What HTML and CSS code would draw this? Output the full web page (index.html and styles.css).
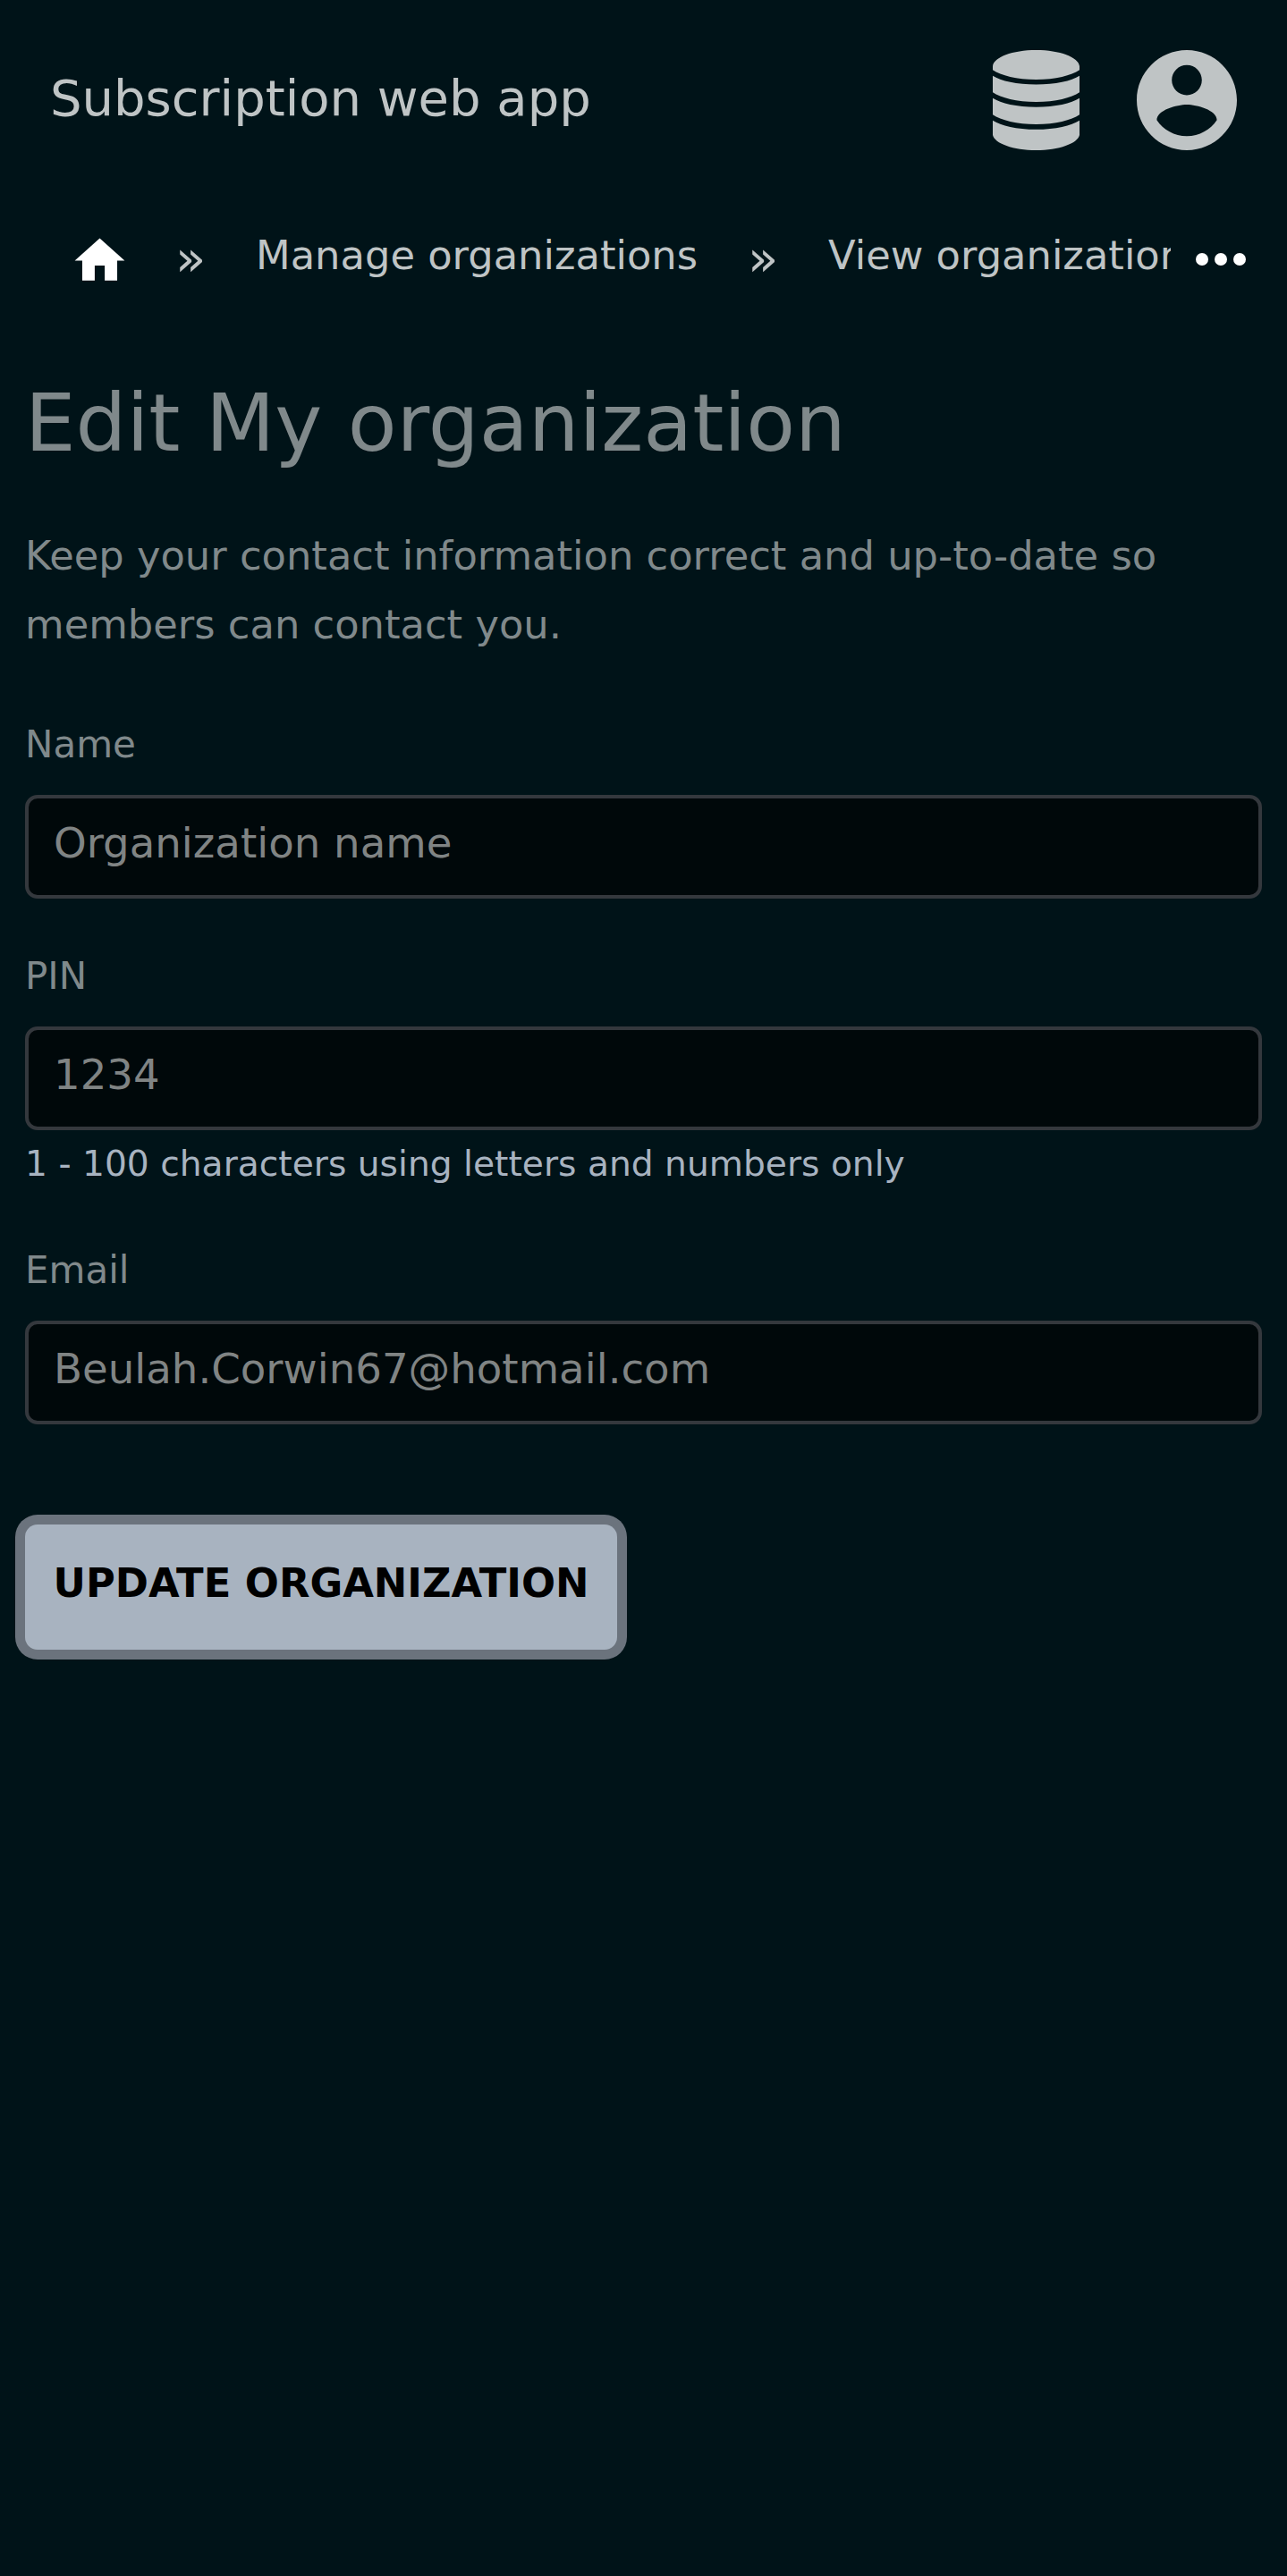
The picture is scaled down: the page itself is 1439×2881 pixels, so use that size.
FILE: index.html
```html
<!DOCTYPE html>
<html lang="en">
<head>
<meta charset="utf-8">
<title>Subscription web app</title>
<link rel="stylesheet" href="styles.css">
</head>
<body>
<header class="topbar">
  <a class="brand">Subscription web app</a>
  <div class="actions">
    <svg class="icon-db" viewBox="0 0 97 112"><path d="M0 18C1 8 22 0 48.500 0S96 8 97 18V22.300C88 28.500 70 33 48.500 33S9 28.500 0 22.300ZM0 28.700C9 34.500 27 38.500 48.500 38.500S88 34.500 97 28.700V47.300C88 53.500 70 58 48.500 58S9 53.500 0 47.300ZM0 53.700C9 59.500 27 63.700 48.500 63.700S88 59.500 97 53.700V72.300C88 78.500 70 83 48.500 83S9 78.500 0 72.300ZM0 78.700C9 84.500 27 88.800 48.500 88.800S88 84.500 97 78.700V95C95 104.500 74 112 48.500 112S2 104.500 0 95Z"/></svg>
    <svg class="icon-user" viewBox="2 2 20 20"><path d="M12 2C6.480 2 2 6.480 2 12s4.480 10 10 10 10-4.480 10-10S17.520 2 12 2zm0 3c1.660 0 3 1.340 3 3s-1.340 3-3 3-3-1.340-3-3 1.340-3 3-3zm0 14.200c-2.500 0-4.710-1.280-6-3.220.030-1.990 4-3.080 6-3.080 1.990 0 5.970 1.090 6 3.080-1.290 1.940-3.500 3.220-6 3.220z"/></svg>
  </div>
</header>
<nav class="crumbs">
  <div class="trail">
    <svg class="icon-home" viewBox="0 0 24 24"><path d="M10 20v-6h4v6h5v-8h3L12 3 2 12h3v8z"/></svg>
    <span class="sep">»</span>
    <a class="crumb">Manage organizations</a>
    <span class="sep">»</span>
    <a class="crumb">View organization</a>
  </div>
  <svg class="icon-more" viewBox="0 0 24 24"><circle cx="6" cy="12" r="2"/><circle cx="12" cy="12" r="2"/><circle cx="18" cy="12" r="2"/></svg>
</nav>
<main class="content">
  <h1 class="heading">Edit My organization</h1>
  <p class="intro">Keep your contact information correct and up-to-date so members can contact you.</p>
  <form class="form">
    <div class="field">
      <label class="label" for="name">Name</label>
      <input class="input" id="name" placeholder="Organization name">
    </div>
    <div class="field">
      <label class="label" for="pin">PIN</label>
      <input class="input" id="pin" placeholder="1234">
      <p class="hint">1 - 100 characters using letters and numbers only</p>
    </div>
    <div class="field">
      <label class="label" for="email">Email</label>
      <input class="input" id="email" placeholder="Beulah.Corwin67@hotmail.com">
    </div>
    <button class="submit" type="button">UPDATE ORGANIZATION</button>
  </form>
</main>
</body>
</html>
```
FILE: styles.css
```css
* { box-sizing: border-box; }
body {
  margin: 0;
  min-height: 2881px;
  background: #001318;
  color: #80898b;
  font-family: "DejaVu Sans", sans-serif;
  font-size: 44.8px;
}
svg { display: block; flex: none; }
.topbar {
  display: flex;
  align-items: center;
  justify-content: space-between;
  height: 224px;
  padding: 0 56px;
}
.brand { font-size: 56px; line-height: 66px; margin-top: -4px; color: #bfc4c5; }
.actions { display: flex; gap: 64px; fill: #bfc4c5; }
.icon-db { width: 97px; height: 112px; }
.icon-user { width: 112px; height: 112px; }
.crumbs {
  display: flex;
  align-items: center;
  height: 132px;
  padding: 0 32px 0 28px;
  fill: #fff;
}
.trail {
  display: flex;
  align-items: center;
  flex: none;
  width: 1281px;
  height: 132px;
  padding-left: 50px;
  overflow: hidden;
  white-space: nowrap;
  color: #bfc4c5;
}
.icon-home { width: 67px; height: 67px; margin-top: 3px; }
.sep { flex: none; width: 34px; margin: -2px 56px 0 51px; font-size: 56px; line-height: 66px; }
.crumb { flex: none; line-height: 52px; margin-top: -9px; }
.crumb + .sep { margin-left: 56px; }
.icon-more { width: 84px; height: 84px; margin-left: 14px; }
.content { padding: 0 28px; }
.heading { margin: 64px 0 0; font-size: 89.6px; line-height: 106px; font-weight: 400; }
.intro { margin: 57px 0 0; line-height: 77px; }
.form { margin-top: 71px; }
.field { margin-bottom: 62px; }
.label { display: block; font-size: 42px; line-height: 50px; margin-bottom: 31px; }
.input {
  display: block;
  width: 100%;
  height: 116px;
  padding: 0 28px 8px;
  border: 4px solid #34383d;
  border-radius: 14px;
  background: #00080a;
  color: #808484;
  font: 46.667px "DejaVu Sans", sans-serif;
}
.input::placeholder { color: #808484; opacity: 1; }
.hint { margin: 15px 0 71px; font-size: 39.2px; line-height: 46px; color: #a8b3c0; }
.submit {
  display: block;
  height: 140px;
  margin-top: 112px;
  padding: 0 31.500px 10px;
  border: 0;
  border-radius: 14px;
  background: #a8b3c0;
  box-shadow: 0 0 0 11px #6b737d;
  color: #000;
  font: bold 44.8px "DejaVu Sans", sans-serif;
}
```
